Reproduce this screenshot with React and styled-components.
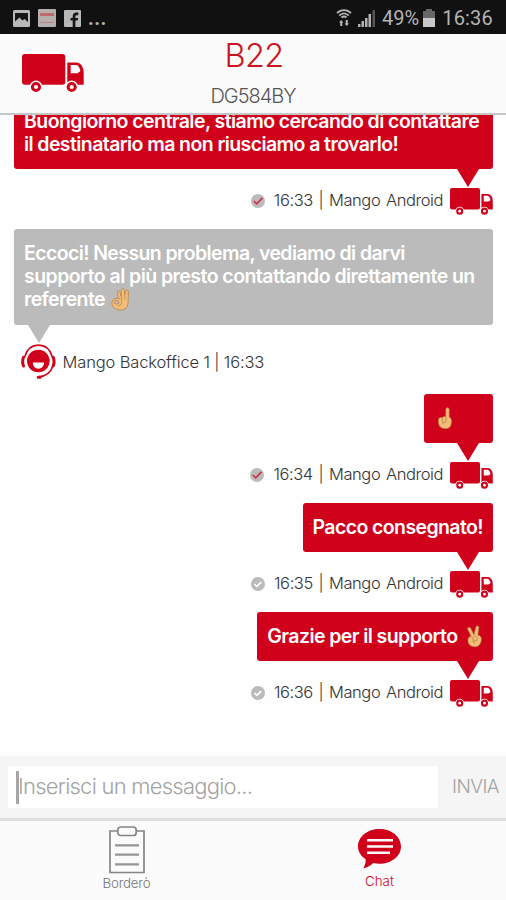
import React from 'react';
import styled, { createGlobalStyle } from 'styled-components';

const RED = '#d0021b';
const GREY = '#bbbbbb';

const GlobalStyle = createGlobalStyle`
  * {
    box-sizing: border-box;
  }

  body {
    margin: 0;
    background: #fff;
    font-family: Inter, 'Liberation Sans', sans-serif;
  }
`;

const Screen = styled.div`
  display: flex;
  flex-direction: column;
  width: 506px;
  height: 900px;
  overflow: hidden;
  background: #fefefe;
`;

const StatusBar = styled.div`
  display: flex;
  flex: none;
  justify-content: space-between;
  height: 34px;
  padding: 2px 13px 0 13px;
  background: #111;
  color: #b4b4b4;
`;

const StatusGroup = styled.div`
  display: flex;
  align-items: center;
  font-family: Roboto, sans-serif;
  font-size: 20px;
  white-space: nowrap;

  svg {
    flex: none;
  }
`;

const StatusText = styled.span`
  margin-left: ${({ $gap }) => $gap || 0}px;
  letter-spacing: ${({ $spacing }) => $spacing || 0}px;
  font-weight: ${({ $bold }) => ($bold ? 700 : 400)};
`;

const Header = styled.header`
  display: grid;
  flex: none;
  grid-template-columns: 84px 1fr 84px;
  height: 81px;
  border-bottom: 2px solid #c6c6c6;
  background: #fbfbfb;
`;

const HeaderIcon = styled.div`
  padding: 20px 0 0 22px;
`;

const HeaderTitles = styled.div`
  display: flex;
  flex-direction: column;
  align-items: center;
`;

const Title = styled.h1`
  margin: 4px 0 0 2px;
  color: #cc1420;
  font-size: 32.5px;
  font-weight: 300;
  line-height: 36px;
  letter-spacing: -0.7px;
`;

const Subtitle = styled.div`
  margin-top: 10px;
  color: #555;
  font-size: 20px;
  font-weight: 300;
  line-height: 24px;
  letter-spacing: -1px;
`;

const Messages = styled.main`
  display: flex;
  flex: 1;
  flex-direction: column;
  justify-content: flex-end;
  min-height: 0;
  padding: 0 13px 35.5px 14px;
  overflow: hidden;
`;

const Message = styled.div`
  display: flex;
  flex: none;
  flex-direction: column;
  align-items: ${({ $incoming }) => ($incoming ? 'flex-start' : 'flex-end')};
  padding-bottom: ${({ $incoming }) => ($incoming ? 14 : 13.5)}px;
`;

const Bubble = styled.div`
  position: relative;
  width: ${({ $wide }) => ($wide ? '100%' : 'auto')};
  min-width: 69px;
  padding: 13px 10px;
  border-radius: 3px;
  background: ${({ $incoming }) => ($incoming ? GREY : RED)};
  color: #fff;
  font-size: 19.5px;
  font-weight: 600;
  line-height: 23.3px;
  white-space: nowrap;

  &::after {
    content: '';
    position: absolute;
    top: 100%;
    ${({ $incoming }) => ($incoming ? 'left: 14px' : 'right: 14px')};
    border-top: 18px solid ${({ $incoming }) => ($incoming ? GREY : RED)};
    border-right: 11px solid transparent;
    border-left: 11px solid transparent;
  }
`;

const Line = styled.div`
  display: flex;
  align-items: center;
  height: 23.3px;
  letter-spacing: ${({ $spacing }) => $spacing}px;

  svg {
    flex: none;
    margin-left: ${({ $emojiGap }) => $emojiGap || 0}px;
  }
`;

const Meta = styled.div`
  display: flex;
  align-items: center;
  height: ${({ $incoming }) => ($incoming ? 37 : 28)}px;
  margin-top: ${({ $incoming }) => ($incoming ? 18.5 : 18)}px;
  padding-left: ${({ $incoming }) => ($incoming ? 7 : 0)}px;
  color: #333;
  font-size: 16.5px;
  font-weight: 300;
  white-space: nowrap;

  svg {
    flex: none;
  }
`;

const MetaText = styled.span`
  margin: 0 ${({ $right }) => $right || 0}px 0 ${({ $left }) => $left}px;
  padding-bottom: ${({ $lift }) => $lift || 0}px;
  letter-spacing: ${({ $spacing }) => $spacing}px;
  word-spacing: ${({ $words }) => $words || 0}px;
`;

const Composer = styled.div`
  display: flex;
  flex: none;
  align-items: center;
  height: 62px;
  padding-left: 8px;
  background: #f5f5f5;
`;

const Field = styled.div`
  display: flex;
  align-items: center;
  width: 430px;
  height: 42px;
  padding-left: 8px;
  background: #fff;
  color: #a3a3a3;
  font-size: 22px;
  font-weight: 300;
  line-height: 26px;
  letter-spacing: -0.76px;
`;

const Placeholder = styled.span`
  padding-bottom: 2px;
`;

const Caret = styled.span`
  width: 3px;
  height: 33px;
  margin-right: -1px;
  background: #a6a6a6;
`;

const Send = styled.button`
  flex: 1;
  padding: 0 0 2px 7px;
  border: 0;
  background: none;
  color: #a3a3a3;
  font-family: inherit;
  font-size: 19px;
  font-weight: 300;
  letter-spacing: -0.6px;
`;

const TabBar = styled.nav`
  display: grid;
  flex: none;
  grid-template-columns: 1fr 1fr;
  height: 82px;
  border-top: 3px solid #dedede;
  background: #fbfbfb;
`;

const Tab = styled.div`
  display: flex;
  flex-direction: column;
  align-items: center;
  padding-top: ${({ $top }) => $top}px;
  color: ${({ $active }) => ($active ? RED : '#777')};
  font-size: 13.3px;
  font-weight: 300;
  line-height: 16px;
  letter-spacing: ${({ $active }) => ($active ? 0.1 : -0.2)}px;

  svg {
    flex: none;
    margin-bottom: ${({ $gap }) => $gap}px;
  }
`;

const Truck = ({ width, height }) => (
  <svg width={width} height={height} viewBox="0 0 62 38.5" preserveAspectRatio="none">
    <g fill={RED}>
      <rect width="43.3" height="30.7" rx="3" />
      <path d="M45.3 30.7V8.5h9.2c4 0 7.2 4.3 7.2 10.3v11.9z" />
    </g>
    <path d="M48.7 10.9h5.5c2.1 0 4.1 3.6 4.1 6.4l-3 1.9h-6.6z" fill="#fff" />
    {[14, 49.7].map((cx) => (
      <g key={cx}>
        <circle cx={cx} cy="33" r="6.4" fill="#fff" />
        <circle cx={cx} cy="33" r="3.6" fill="none" stroke={RED} strokeWidth="3" />
      </g>
    ))}
  </svg>
);

const Operator = () => (
  <svg width="35" height="36" viewBox="0 0 35 36">
    <circle cx="17.3" cy="17" r="11.3" fill={RED} />
    <path d="M11.8 18.6H23c0 3.6-2.4 6.2-5.6 6.2s-5.6-2.6-5.600-6.200z" fill="#fff" />
    <g fill="none" stroke={RED} strokeLinecap="round">
      <path d="M3.9 12.5C5.900 5.500 11 1.200 17.500 1.200s11.600 4.300 13.600 11.300" strokeWidth="1.700" />
      <path d="M2.500 13.300c-1 2.500-1 6.200 0 8.700M32.200 13.300c1 2.500 1 6.200 0 8.700" strokeWidth="3" />
      <path d="M31.900 22c-2 6-7 10.300-14 10.700" strokeWidth="1.600" />
      <path d="M17.300 33.200h1.800" strokeWidth="3" />
    </g>
  </svg>
);

const Check = ({ read }) => (
  <svg width="14" height="14" viewBox="0 0 14 14">
    <circle cx="7" cy="7" r="7" fill={GREY} />
    <path
      d={read ? 'M2.800 7l2.900 2.800 5.800-6' : 'M3.600 7.200l2.300 2.200 4.400-4.300'}
      fill="none"
      stroke={read ? '#cf3343' : '#fff'}
      strokeWidth="1.700"
    />
  </svg>
);

const skin = { fill: '#f1bd78', stroke: '#b87a3c', strokeWidth: 0.7, strokeLinejoin: 'round' };

const OkHand = () => (
  <svg width="19" height="23" viewBox="0 0 19 23">
    <g {...skin}>
      <path d="M7.500 10.500L6.200 4.600c-.4-2 1.900-2.600 2.500-.7l1.400 4.300L10.300 2c.1-2.100 2.900-2.100 3 0l.5 4.800.9-3.300c.6-1.900 2.900-1.400 2.700.6l-.4 11.200c-.2 4.200-3 6.700-7 6.700-3.500 0-6.300-1.300-8-3.500-1.700-2.500-1.400-5.600.7-7.200 1.400-1 3.300-1.200 4.800-.8z" />
      <path d="M10.100 8.200l1 3.300M13.800 6.800l.2 4.700" fill="none" />
      <ellipse cx="5.600" cy="14.300" rx="2.300" ry="1.900" fill={GREY} />
      <path d="M7.500 10.500c2.700.6 3.800 2.500 2.900 5-.5 1.500-1.900 2.300-3.900 2.400" fill="none" />
    </g>
  </svg>
);

const PointUp = () => (
  <svg width="16" height="23" viewBox="0 0 16 23">
    <g {...skin}>
      <path d="M8.800 10V2.500c0-2.300 3.400-2.300 3.400 0V10c2.200 1.300 2.600 3 2.200 6-.3 3.800-2.400 5.700-6 5.700-3.800 0-6-1.800-6.700-4.700-.6-2.700-.5-5.400.9-6.200.9-.6 1.800-.5 2.400.1.900-1.400 2.900-1.700 3.800-.9z" />
      <path d="M5 10.900c.7.800.5 3.500.4 5M8.800 10c.6 1.500.4 3.300-.2 5l-3 1.500" fill="none" />
    </g>
  </svg>
);

const Victory = () => (
  <svg width="17" height="23" viewBox="0 0 17 23">
    <g {...skin}>
      <path d="M5 11L1.800 4.500C1 2.500 3.700 1.300 4.700 3.300L8 10l1.800-7.800c.5-2.100 3.400-1.500 3.100.6L11.800 10c3 .6 4 2.600 3.400 5.800-.6 4-2.900 6-6.500 6-3.700 0-6.200-1.900-6.700-5.200-.4-3 .5-4.800 3-5.600z" />
      <path d="M2.300 13.500c1.500-2.400 3.700-2 4.700 0l.5 2.800M7 12.500c1.200-1.700 3.200-1.600 4.200 0l-.4 2.800-4 1.300 2.300 2" fill="none" />
    </g>
  </svg>
);

const Picture = () => (
  <svg width="17" height="17" viewBox="0 0 17 17">
    <rect width="17" height="17" rx="1.500" fill="#b9b9b9" />
    <path d="M2 3h13v9l-3.500-3-2 1.500-3-3L2 11.500z" fill="#171717" />
  </svg>
);

const Facebook = () => (
  <svg width="17" height="17" viewBox="0 0 17 17">
    <rect width="17" height="17" rx="1" fill="#b9b9b9" />
    <path d="M8.700 17v-6.500H6.500V8h2.200V6.400C8.700 4 10 2.600 12.500 2.600h1.800v2.600h-1.400c-1.100 0-1.500.5-1.500 1.400V8h2.700l-.4 2.500h-2.300V17z" fill="#171717" />
  </svg>
);

const AppBadge = styled.div`
  display: flex;
  align-items: center;
  justify-content: center;
  width: 18px;
  height: 18px;
  margin: 0 8px;
  border-radius: 1px;
  background: #b5b0ae;

  &::before {
    content: '';
    width: 14px;
    height: 6px;
    border-top: 3px solid #bd6b6b;
    border-bottom: 1px solid #c08282;
  }
`;

const Wifi = () => (
  <svg width="16" height="18" viewBox="0 0 16 18">
    <g fill="none" stroke="#b4b4b4">
      <path d="M1 4.200c4-4 10-4 14 0M3.200 6.700c3-2.900 6.600-2.900 9.600 0" strokeWidth="1.800" />
      <path d="M5.500 8.600c1.600-1.500 3.400-1.500 5 0" strokeWidth="2" />
    </g>
    <path d="M3 13.500L5.200 11l2.200 2.500H6.300V17H4.200v-3.500zM8.500 14.500h1.200V11h2.100v3.500h1.200L10.800 17z" fill="#b4b4b4" />
  </svg>
);

const Signal = () => (
  <svg width="18" height="17" viewBox="0 0 18 17">
    <path d="M0 17v-3h2.500v3zM3.500 17v-6H6v6zM7 17V8h2.500v9zM10.500 17V4H13v13z" fill="#b4b4b4" />
    <path d="M14.500 17V0H17v17z" fill="#555" />
  </svg>
);

const Battery = () => (
  <svg width="12" height="18" viewBox="0 0 12 18">
    <path d="M0 2h3V0h6v2h3v7H0z" fill="#666" />
    <path d="M0 9h12v9H0z" fill="#c8c8c8" />
  </svg>
);

const Clipboard = () => (
  <svg width="36" height="48" viewBox="0 0 36 48" fill="none" stroke="#858585" strokeWidth="1.700">
    <path d="M9 5H1v41.500h34V5h-8" />
    <rect x="8.800" y="1" width="18.400" height="8.500" rx="3" />
    <path d="M6 19.300h24M6 28.600h24M6 38.300h24" strokeWidth="2.200" stroke="#959595" />
  </svg>
);

const ChatIcon = () => (
  <svg width="43" height="40" viewBox="0 0 43 40">
    <path d="M21.500 0C33.500 0 43 7.800 43 17.400s-9.500 17.300-21.500 17.300c-2.100 0-4.200-.3-6.200-.8-2.500 2.500-5.800 4.500-10 5.600 1.600-3 2.500-6 2.400-9.300C2.900 27 0 22.500 0 17.400 0 7.800 9.500 0 21.500 0z" fill={RED} />
    <path d="M9 11.200h26M9 17.500h26M9 23.700h23" stroke="#fbfbfb" strokeWidth="2.400" />
  </svg>
);

const messages = [
  {
    wide: true,
    read: true,
    time: '16:33',
    lines: [
      { text: 'Buongiorno centrale, stiamo cercando di contattare', spacing: -0.56 },
      { text: 'il destinatario ma non riusciamo a trovarlo!', spacing: -0.59 },
    ],
  },
  {
    wide: true,
    incoming: true,
    lines: [
      { text: 'Eccoci! Nessun problema, vediamo di darvi', spacing: -0.61 },
      { text: 'supporto al più presto contattando direttamente un', spacing: -0.55 },
      { text: 'referente', spacing: -0.62, emoji: <OkHand />, emojiGap: 6 },
    ],
  },
  { read: true, time: '16:34', lines: [{ emoji: <PointUp />, emojiGap: 3 }] },
  { time: '16:35', lines: [{ text: 'Pacco consegnato!', spacing: -0.6 }] },
  { time: '16:36', lines: [{ text: 'Grazie per il supporto', spacing: -0.58, emoji: <Victory />, emojiGap: 8.5 }] },
];

const ChatMessage = ({ incoming, wide, read, time, lines }) => (
  <Message $incoming={incoming}>
    <Bubble $incoming={incoming} $wide={wide}>
      {lines.map((line, index) => (
        <Line key={index} $spacing={line.spacing} $emojiGap={line.emojiGap}>
          {line.text}
          {line.emoji}
        </Line>
      ))}
    </Bubble>
    <Meta $incoming={incoming}>
      {incoming ? (
        <>
          <Operator />
          <MetaText $left={6.5} $spacing={-0.14}>Mango Backoffice 1 | 16:33</MetaText>
        </>
      ) : (
        <>
          <Check read={read} />
          <MetaText $left={9} $right={7} $lift={2} $spacing={-0.42} $words={1.5}>
            {time} | Mango Android
          </MetaText>
          <Truck width={43} height={27} />
        </>
      )}
    </Meta>
  </Message>
);

const App = () => {
  return (
    <>
      <GlobalStyle />
      <Screen>
        <StatusBar>
          <StatusGroup>
            <Picture />
            <AppBadge />
            <Facebook />
            <StatusText $gap={7} $spacing={0.5} $bold>...</StatusText>
          </StatusGroup>
          <StatusGroup>
            <Wifi />
            <StatusText $gap={6} />
            <Signal />
            <StatusText $gap={6}>49%</StatusText>
            <StatusText $gap={4} />
            <Battery />
            <StatusText $gap={7} $spacing={0.2}>16:36</StatusText>
          </StatusGroup>
        </StatusBar>
        <Header>
          <HeaderIcon>
            <Truck width={62} height={38.5} />
          </HeaderIcon>
          <HeaderTitles>
            <Title>B22</Title>
            <Subtitle>DG584BY</Subtitle>
          </HeaderTitles>
        </Header>
        <Messages>
          {messages.map((message, index) => (
            <ChatMessage key={index} {...message} />
          ))}
        </Messages>
        <Composer>
          <Field>
            <Caret />
            <Placeholder>Inserisci un messaggio...</Placeholder>
          </Field>
          <Send>INVIA</Send>
        </Composer>
        <TabBar>
          <Tab $top={5} $gap={1}>
            <Clipboard />
            Borderò
          </Tab>
          <Tab $active $top={8} $gap={4}>
            <ChatIcon />
            Chat
          </Tab>
        </TabBar>
      </Screen>
    </>
  );
};

export default App;
